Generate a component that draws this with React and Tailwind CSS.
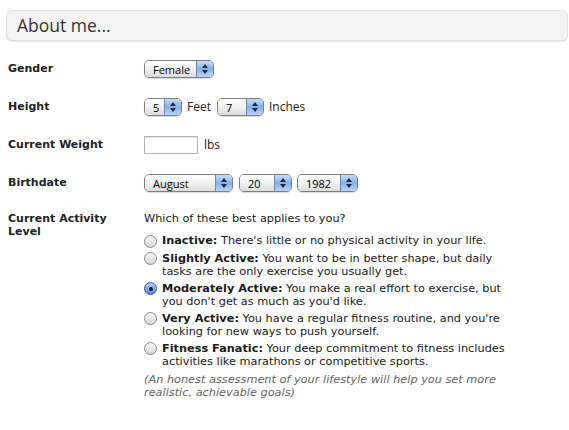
import React from 'react';

const Select = ({ value, width }) => (
  <div
    className="flex h-[18px] items-stretch overflow-hidden rounded-[5px] border border-[#7d7d7d] shadow-[0_1px_1px_rgba(0,0,0,0.15)]"
    style={{ width }}
  >
    <div className="flex flex-1 items-center bg-gradient-to-b from-white via-[#f1f1f1] to-[#dcdcdc] pl-[8px] font-['Open_Sans',sans-serif] text-[11px] leading-none text-black">
      {value}
    </div>
    <div className="flex w-[17px] flex-col items-center justify-center gap-[2px] border-l border-[#6f86b3] bg-gradient-to-b from-[#c9dcf7] via-[#86b0ea] to-[#b9d5f8]">
      <span className="h-0 w-0 border-x-[3px] border-b-[4px] border-x-transparent border-b-[#1c2a44]" />
      <span className="h-0 w-0 border-x-[3px] border-t-[4px] border-x-transparent border-t-[#1c2a44]" />
    </div>
  </div>
);

const Radio = ({ checked }) => (
  <span
    className="mt-[0.5px] flex h-[13px] w-[13px] shrink-0 items-center justify-center rounded-full border border-[#8a8a8a] bg-gradient-to-b from-[#f6f6f6] to-[#d8d8d8] data-[on=true]:border-[#37568e] data-[on=true]:from-[#b3d0f5] data-[on=true]:to-[#4d8ad9]"
    data-on={checked}
  >
    {checked && <span className="h-[4px] w-[4px] rounded-full bg-[#111]" />}
  </span>
);

const Row = ({ label, children }) => (
  <div className="flex h-[38px] items-center">
    <div className="w-[136px] text-[11px] font-bold text-[#222]">{label}</div>
    <div className="flex items-center font-['Open_Sans',sans-serif] text-[12px] text-[#222]">{children}</div>
  </div>
);

const options = [
  { title: 'Inactive:', text: "There's little or no physical activity in your life." },
  { title: 'Slightly Active:', text: 'You want to be in better shape, but daily tasks are the only exercise you usually get.' },
  { title: 'Moderately Active:', text: "You make a real effort to exercise, but you don't get as much as you'd like.", checked: true },
  { title: 'Very Active:', text: "You have a regular fitness routine, and you're looking for new ways to push yourself." },
  { title: 'Fitness Fanatic:', text: 'Your deep commitment to fitness includes activities like marathons or competitive sports.' },
];

export default function App() {
  return (
    <div className="h-[430px] w-[569px] bg-white pt-[10px] font-['DejaVu_Sans',Verdana,sans-serif]">
      <div className="ml-[6px] mr-[1px] flex h-[31px] items-center rounded-[6px] border border-[#e2e2e2] bg-[#f3f3f3] pl-[10px] shadow-[0_1px_1px_rgba(0,0,0,0.1)]">
        <h1 className="font-['Open_Sans',sans-serif] text-[17.5px] font-normal text-[#333]">About me...</h1>
      </div>

      <div className="pl-[8px] pt-[9px]">
        <Row label="Gender">
          <Select value="Female" width={70} />
        </Row>
        <Row label="Height">
          <Select value="5" width={38} />
          <span className="ml-[5px] mr-[6px]">Feet</span>
          <Select value="7" width={47} />
          <span className="ml-[5px]">Inches</span>
        </Row>
        <Row label="Current Weight">
          <div className="h-[18px] w-[54px] border border-[#b5b5b5] bg-white shadow-[inset_0_1px_1px_rgba(0,0,0,0.1)]" />
          <span className="ml-[6px]">lbs</span>
        </Row>
        <Row label="Birthdate">
          <Select value="August" width={89} />
          <div className="w-[6px]" />
          <Select value="20" width={53} />
          <div className="w-[5px]" />
          <Select value="1982" width={61} />
        </Row>

        <div className="flex pt-[10px]">
          <div className="w-[136px] text-[11px] font-bold leading-[13px] text-[#222]">
            Current Activity<br />Level
          </div>
          <div className="w-[362px] text-[11.3px] leading-[13px] text-[#1a1a1a]">
            <p className="mb-[9px]">Which of these best applies to you?</p>
            {options.map((o) => (
              <div key={o.title} className="mb-[4px] flex gap-[4px]">
                <Radio checked={o.checked} />
                <p className="pl-[1px]">
                  <b>{o.title}</b> {o.text}
                </p>
              </div>
            ))}
            <p className="mt-[5px] pr-[10px] italic text-[#666]">
              (An honest assessment of your lifestyle will help you set more realistic, achievable goals)
            </p>
          </div>
        </div>
      </div>
    </div>
  );
}
